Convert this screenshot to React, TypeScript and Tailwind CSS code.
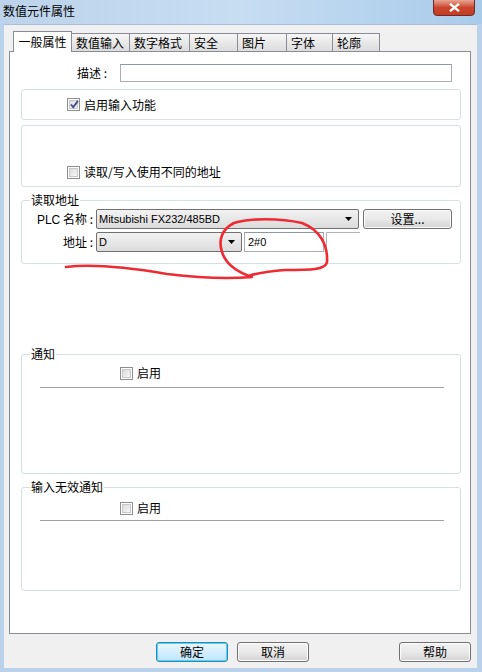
import React from "react";

const cjk = { fontFamily: '"Noto Sans CJK SC", "Noto Sans", sans-serif' };
const latin = { fontFamily: '"Liberation Sans", Arial, "Noto Sans CJK SC", sans-serif' };

function CheckBox({ checked = false }: { checked?: boolean }) {
  return (
    <div className="w-[13px] h-[13px] border border-[#8f8f8f] bg-white p-[1px] shrink-0 relative">
      <div className="w-full h-full bg-gradient-to-br from-[#dcdcdc] to-[#f6f6f6] border border-[#c8c8c8]" />
      {checked && (
        <svg className="absolute left-[1px] top-[0px]" width="11" height="11" viewBox="0 0 11 11">
          <path d="M2 5.5 L4.3 8.3 L9 1.8" stroke="#3b4d8f" strokeWidth="1.9" fill="none" />
        </svg>
      )}
    </div>
  );
}

function Group({ label, className, children }: { label?: string; className: string; children?: React.ReactNode }) {
  return (
    <div className={"relative border border-[#d5dfe5] rounded-[3px] " + className}>
      {label && (
        <span className="absolute left-[8px] top-[-9px] bg-white px-[1px] text-[12px] leading-[16px] text-black" style={cjk}>
          {label}
        </span>
      )}
      {children}
    </div>
  );
}

function Arrow() {
  return (
    <svg width="7" height="4" viewBox="0 0 7 4" className="shrink-0">
      <path d="M0 0 H7 L3.5 4 Z" fill="#000" />
    </svg>
  );
}

function Combo({ text, className }: { text: string; className: string }) {
  return (
    <div
      className={
        "h-[20px] border border-[#707070] rounded-[2px] bg-gradient-to-b from-[#f2f2f2] to-[#dcdcdc] flex items-center pl-[2px] pr-[6px] " +
        className
      }
    >
      <span className="flex-1 text-[11px] leading-[14px] text-black" style={latin}>
        {text}
      </span>
      <Arrow />
    </div>
  );
}

function Btn({ text, className, def = false }: { text: string; className: string; def?: boolean }) {
  return (
    <div
      className={
        "h-[20px] rounded-[3px] border flex items-center justify-center text-[12px] leading-[14px] text-black " +
        (def
          ? "border-[#3c7fb1] bg-gradient-to-b from-[#eaf6fd] to-[#bee6fd] shadow-[inset_0_0_0_1px_#48d8fa]"
          : "border-[#707070] bg-gradient-to-b from-[#f2f2f2] via-[#e9e9e9] to-[#d4d4d4] shadow-[inset_0_0_0_1px_#fcfcfc]") +
        " " +
        className
      }
      style={cjk}
    >
      {text}
    </div>
  );
}

export default function App() {
  const tabs = ["数值输入", "数字格式", "安全", "图片", "字体", "轮廓"];
  const tabW = [58, 60, 48, 49, 46, 47];
  return (
    <div className="w-[482px] h-[672px] bg-[#b9d1ea] flex flex-col overflow-hidden relative select-none">
      {/* Title bar */}
      <div className="h-[24px] shrink-0 relative bg-gradient-to-r from-[#bcd3eb] via-[#c6ddf2] to-[#a9cbea] flex items-start">
        <span className="ml-[3px] mt-[3px] text-[12px] leading-[16px] text-black" style={cjk}>
          数值元件属性
        </span>
        <div className="absolute left-[433px] top-[-1px] w-[42px] h-[17px] rounded-b-[4px] border border-[#6d2a20] bg-gradient-to-b from-[#e8a494] via-[#c9452d] to-[#c73c24] flex items-center justify-center">
          <svg width="11" height="9" viewBox="0 0 11 9">
            <path d="M1 0.8 L10 8.2 M10 0.8 L1 8.2" stroke="#fff" strokeWidth="2.3" />
          </svg>
        </div>
      </div>

      {/* Client */}
      <div className="ml-[4px] w-[473px] h-[644px] bg-[#f0f0f0] border-t border-[#a7bed7] flex flex-col pl-[5px]">
        {/* tabs */}
        <div className="h-[26px] flex items-end pl-[4px] relative z-10">
          <div
            className="w-[59px] h-[21px] bg-white border border-b-0 border-[#898c95] flex items-center justify-center text-[12px] leading-[14px] mb-[-1px] pb-[1px]"
            style={cjk}
          >
            一般属性
          </div>
          {tabs.map((t, i) => (
            <div
              key={t}
              className="h-[18px] border border-b-0 border-l-0 border-[#898c95] bg-gradient-to-b from-[#f6f6f6] to-[#dcdcdc] flex items-center pl-[4px] text-[12px] leading-[14px]"
              style={{ ...cjk, width: tabW[i] }}
            >
              {t}
            </div>
          ))}
        </div>

        {/* page */}
        <div className="w-[462px] h-[583px] bg-white border border-[#898c95] relative flex flex-col pl-[11px]">
          {/* description */}
          <div className="mt-[12px] h-[18px] flex items-center">
            <span className="ml-[56px] w-[42px] text-[12px] leading-[14px]" style={cjk}>
              描述 :
            </span>
            <div className="ml-[1px] w-[332px] h-[18px] border border-[#abadb3] border-t-[#8a98a8] bg-white" />
          </div>

          <Group className="mt-[7px] w-[440px] h-[31px] flex items-center">
            <div className="ml-[45px] flex items-center gap-[4px]">
              <CheckBox checked />
              <span className="text-[12px] leading-[14px]" style={cjk}>
                启用输入功能
              </span>
            </div>
          </Group>

          <Group className="mt-[5px] w-[440px] h-[62px] flex items-end pb-[7px]">
            <div className="ml-[45px] flex items-center gap-[4px]">
              <CheckBox />
              <span className="text-[12px] leading-[14px]" style={cjk}>
                读取/写入使用不同的地址
              </span>
            </div>
          </Group>

          <Group label="读取地址" className="mt-[13px] w-[440px] h-[64px] flex flex-col">
            <div className="mt-[8px] flex items-center h-[20px]">
              <span className="w-[72px] text-right text-[12px] leading-[14px] pr-[1px]" style={cjk}>
                <span style={latin}>PLC</span> 名称 :
              </span>
              <Combo text="Mitsubishi FX232/485BD" className="ml-[2px] w-[263px]" />
              <Btn text="设置..." className="ml-[4px] w-[89px]" />
            </div>
            <div className="mt-[3px] flex items-center h-[20px]">
              <span className="w-[72px] text-right text-[12px] leading-[14px] pr-[1px]" style={cjk}>
                地址 :
              </span>
              <Combo text="D" className="ml-[2px] w-[146px]" />
              <div className="ml-[2px] w-[80px] h-[20px] border border-[#abadb3] border-t-[#8a98a8] bg-white flex items-center pl-[3px] text-[11px]" style={latin}>
                2#0
              </div>
              <div className="ml-[2px] w-[34px] h-[20px] border-l border-t border-[#b0b4ba] bg-white" />
            </div>
          </Group>

          <Group label="通知" className="mt-[90px] w-[440px] h-[120px] flex flex-col">
            <div className="mt-[11px] ml-[98px] flex items-center gap-[4px]">
              <CheckBox />
              <span className="text-[12px] leading-[14px]" style={cjk}>
                启用
              </span>
            </div>
            <div className="mt-[7px] ml-[18px] w-[404px] h-[1px] bg-[#a0a0a0]" />
          </Group>

          <Group label="输入无效通知" className="mt-[13px] w-[440px] h-[104px] flex flex-col">
            <div className="mt-[13px] ml-[98px] flex items-center gap-[4px]">
              <CheckBox />
              <span className="text-[12px] leading-[14px]" style={cjk}>
                启用
              </span>
            </div>
            <div className="mt-[5px] ml-[18px] w-[404px] h-[1px] bg-[#a0a0a0]" />
          </Group>
        </div>

        {/* buttons */}
        <div className="mt-[8px] flex items-center">
          <Btn text="确定" def className="ml-[147px] w-[72px]" />
          <Btn text="取消" className="ml-[9px] w-[72px]" />
          <Btn text="帮助" className="ml-[90px] w-[72px]" />
        </div>
      </div>

      {/* red hand-drawn annotation */}
      <svg className="absolute left-0 top-0 pointer-events-none" width="482" height="672" viewBox="0 0 482 672">
        <path
          d="M66 267 C 90 264, 120 266, 167 274 C 200 278, 230 279, 252 277 C 240 273, 226 265, 222 252 C 218 240, 222 229, 234 223 C 250 218, 280 218, 302 223 C 320 230, 328 245, 327 262 C 326 270, 310 270, 285 270 C 270 271, 258 273, 248 276"
          stroke="#ee2b32"
          strokeWidth="2.6"
          fill="none"
          strokeLinecap="round"
          strokeLinejoin="round"
        />
      </svg>
    </div>
  );
}
